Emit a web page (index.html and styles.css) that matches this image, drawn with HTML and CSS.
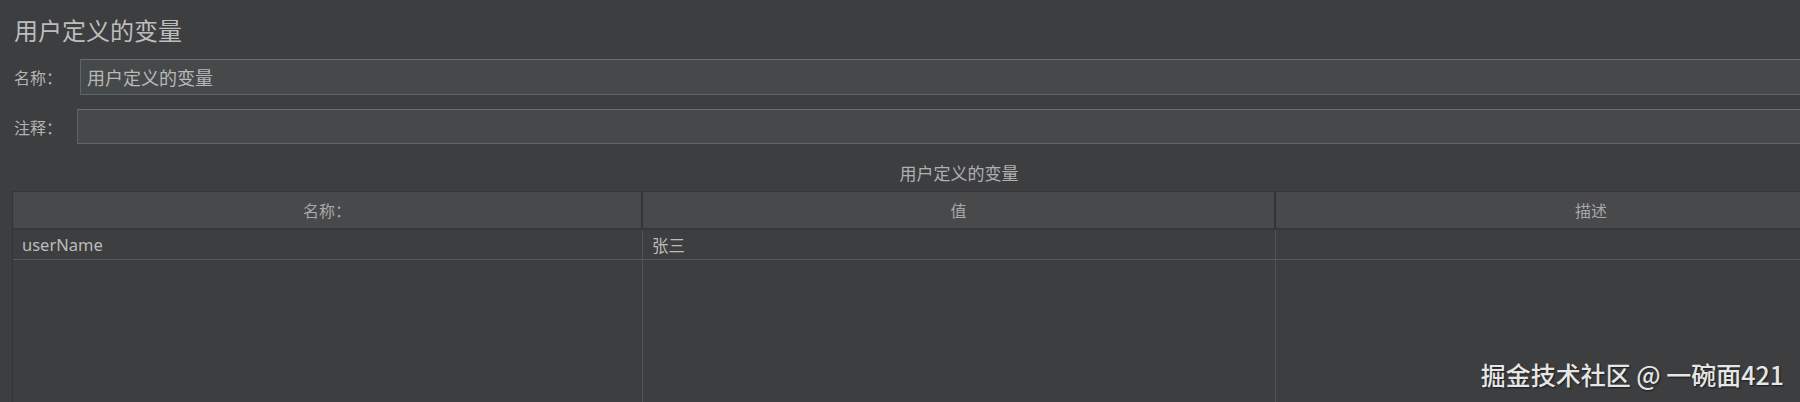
FILE: index.html
```html
<!DOCTYPE html>
<html lang="zh-CN">
<head>
  <meta charset="UTF-8" />
  <title>用户定义的变量</title>
  <link rel="stylesheet" href="styles.css">
</head>
<body>
  <div class="panel">
    <h1 class="panel-title">用户定义的变量</h1>

    <div class="field field-name">
      <label for="name">名称：</label>
      <input type="text" id="name" value="用户定义的变量" />
    </div>

    <div class="field field-comment">
      <label for="comment">注释：</label>
      <input type="text" id="comment" />
    </div>

    <div class="table-title">用户定义的变量</div>

    <div class="table">
      <div class="table-head">
        <div class="th">名称：</div>
        <div class="th">值</div>
        <div class="th">描述</div>
      </div>
      <div class="table-row">
        <div class="td">userName</div>
        <div class="td">张三</div>
        <div class="td"></div>
      </div>
      <div class="table-fill">
        <div class="td"></div>
        <div class="td"></div>
        <div class="td"></div>
      </div>
    </div>
  </div>

  <div class="watermark">掘金技术社区 @ 一碗面421</div>
</body>
</html>
```

FILE: styles.css
```css
html,
body {
  margin: 0;
  height: 100%;
  overflow: hidden;
}

body {
  background-color: #3c3e40;
  color: #bbbbbb;
  font-family: "Noto Sans", "Noto Sans CJK SC", sans-serif;
}

.panel {
  width: 1918px;
  height: 100%;
  display: flex;
  flex-direction: column;
}

.panel-title {
  margin: 14px 0 0 14px;
  font-size: 24px;
  font-weight: normal;
  line-height: 34px;
  color: #bdbdbd;
}

.field {
  display: flex;
  align-items: center;
  padding-left: 14px;
}

.field label {
  font-size: 16px;
  color: #b4b4b4;
}

.field input {
  flex: 1;
  box-sizing: border-box;
  background-color: #46494a;
  border: 1px solid #5f6364;
  border-top-color: #6a6c6d;
  border-bottom-color: #5d6767;
  color: #b8b8b8;
  font-family: "Noto Sans CJK SC", sans-serif;
  font-size: 18px;
  padding: 0 6px;
  outline: none;
}

.field-name {
  margin-top: 11px;
}

.field-name label {
  width: 66px;
}

.field-name input {
  height: 36px;
}

.field-comment {
  margin-top: 14px;
}

.field-comment label {
  width: 63px;
}

.field-comment input {
  height: 35px;
}

.table-title {
  margin-top: 17px;
  text-align: center;
  font-size: 17px;
  line-height: 26px;
  color: #b0b0b0;
}

.table {
  flex: 1;
  display: flex;
  flex-direction: column;
  margin: 4px 0 0 12px;
  width: 1895px;
  border-left: 1px solid #333435;
}

.table-head,
.table-row,
.table-fill {
  display: grid;
  grid-template-columns: 630px 633px 1fr;
}

.table-head {
  height: 36px;
  background-color: #47494b;
  border-top: 1px solid #353638;
  border-bottom: 2px solid #363739;
}

.th {
  display: flex;
  align-items: center;
  justify-content: center;
  font-size: 16px;
  color: #a8a8a8;
  border-right: 2px solid #333435;
}

.table-row {
  height: 29px;
  border-bottom: 1px solid #565859;
}

.td {
  display: flex;
  align-items: center;
  padding-left: 9px;
  font-size: 16.5px;
  color: #bcbcbc;
  border-right: 1px solid #505253;
}

.table-fill {
  flex: 1;
}

.watermark {
  position: absolute;
  right: 16px;
  bottom: 10px;
  font-family: "Noto Sans CJK SC", sans-serif;
  font-size: 25px;
  font-weight: 500;
  color: #e6e6e6;
  text-shadow: 1px 1px 2px rgba(0, 0, 0, 0.6);
}
```
